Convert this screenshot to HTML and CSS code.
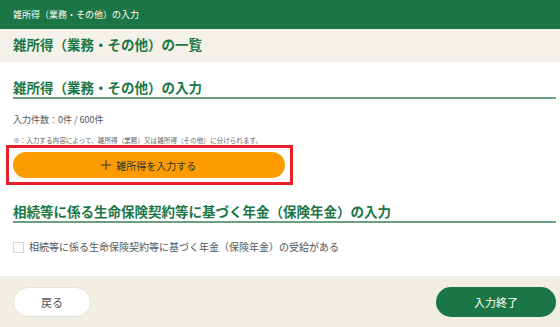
FILE: index.html
```
<!DOCTYPE html>
<html lang="ja">
<head>
	<meta charset="UTF-8">
	<title>雑所得（業務・その他）の入力</title>
	<link rel="stylesheet" href="styles.css">
</head>
<body>
	<div class="topbar">雑所得（業務・その他）の入力</div>
	<div class="titleband">雑所得（業務・その他）の一覧</div>
	<div class="main">
		<h2 class="heading">雑所得（業務・その他）の入力</h2>
		<p class="count">入力件数：0件 / 600件</p>
		<p class="note">※：入力する内容によって、雑所得（業務）又は雑所得（その他）に分けられます。</p>
		<div class="highlight">
			<button class="addbtn">
				<svg width="10" height="10" viewBox="0 0 10 10"><path d="M5 0V10M0 5H10" stroke="#3a3a3a" stroke-width="1.1" fill="none"/></svg>
				<span>雑所得を入力する</span>
			</button>
		</div>
		<h2 class="heading second">相続等に係る生命保険契約等に基づく年金（保険年金）の入力</h2>
		<label class="check"><span class="box"></span>相続等に係る生命保険契約等に基づく年金（保険年金）の受給がある</label>
	</div>
	<div class="footer">
		<button class="back">戻る</button>
		<button class="done">入力終了</button>
	</div>
</body>
</html>
```

FILE: styles.css
```
* { margin: 0; padding: 0; box-sizing: border-box; }
html, body { height: 100%; }
body {
	font-family: "Noto Sans CJK JP", "Noto Sans", sans-serif;
	background: #fff;
	display: flex;
	flex-direction: column;
	color: #444;
}
button { font-family: inherit; border: none; cursor: pointer; }

.topbar {
	height: 29px;
	line-height: 29px;
	background: #1b7645;
	color: #fff;
	font-size: 9px;
	padding-left: 13px;
}
.titleband {
	height: 33px;
	line-height: 30px;
	padding-left: 13px;
	background: #f4f1ea;
	color: #1b7645;
	font-size: 13.5px;
	font-weight: bold;
}

.main { flex: 1; padding: 0 4px 0 13px; }
.heading {
	margin-top: 15px;
	font-size: 13.5px;
	line-height: 20px;
	color: #1b7645;
	font-weight: bold;
	border-bottom: 2px solid #6b9f80;
}
.heading.second { margin-top: 16px; }
.count { margin-top: 14px; font-size: 9px; line-height: 14px; color: #555; }
.note { margin-top: 8px; font-size: 6.6px; line-height: 10px; color: #666; }

.highlight {
	width: 287px;
	margin-left: -7px;
	border: 3.5px solid #e8202a;
	padding: 4px 5px 4px 3.5px;
}
.addbtn {
	width: 100%;
	height: 26px;
	border-radius: 13px;
	background: #fd9c00;
	color: #333;
	font-size: 10px;
	display: flex;
	align-items: center;
	justify-content: center;
	gap: 5px;
}

.check {
	margin-top: 17px;
	display: flex;
	align-items: center;
	font-size: 10px;
	line-height: 14px;
	color: #555;
}
.check .box {
	width: 11px;
	height: 11px;
	border: 1px solid #d6d6d6;
	background: #fff;
	margin-right: 5px;
}

.footer {
	height: 51px;
	background: #f1eee4;
	padding: 11px 4px 0 13px;
	display: flex;
	justify-content: space-between;
	align-items: flex-start;
}
.back {
	width: 78px;
	height: 30px;
	border-radius: 15px;
	background: #fff;
	border: 1px solid #e6e1d6;
	color: #555;
	font-size: 11px;
}
.done {
	width: 120px;
	height: 30px;
	border-radius: 15px;
	background: #1b7645;
	color: #fff;
	font-size: 11px;
}
```
